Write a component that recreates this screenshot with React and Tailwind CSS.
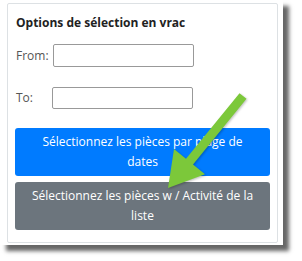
import React from 'react';

const Arrow = () => (
    <svg className="absolute left-0 top-0 pointer-events-none" width="302" height="261" viewBox="0 0 302 261">
        <polygon
            points="168,188 174,149 186,158.8 239.5,93.2 246.5,98.8 193,164.4 205,174.2"
            fill="#7cc83a"
            style={{ filter: 'drop-shadow(1px 1px 1px rgba(0,0,0,0.25))' }}
        />
    </svg>
);

const App = () => {
    return (
        <div className="relative w-[302px] h-[261px] bg-white font-['Open_Sans',sans-serif]">
            <div className="w-[283px] h-[245px] bg-white pl-[7px] pt-[3px] shadow-[6px_6px_4px_rgba(0,0,0,0.6)]">
                <div className="w-[271px] h-[240px] border border-[#dde1e4] rounded-[2px] px-[7px] pt-[10px] flex flex-col">
                    <h2 className="text-[12px] font-bold text-[#222] leading-[18px] pl-[1px]">Options de sélection en vrac</h2>

                    <div className="flex items-center mt-[12px] pl-[1px]">
                        <label className="text-[12px] text-[#555] w-[37px]">From:</label>
                        <input className="w-[141px] h-[23px] border border-[#999] rounded-[2px] bg-white" />
                    </div>

                    <div className="flex items-center mt-[20px] pl-[1px]">
                        <label className="text-[12px] text-[#555] w-[36px]">To:</label>
                        <input className="w-[141px] h-[22px] border border-[#999] rounded-[2px] bg-white" />
                    </div>

                    <button className="mt-[19px] w-full h-[48px] bg-[#007bff] text-white text-[12px] leading-5 rounded-[3px] px-3 text-center">
                        Sélectionnez les pièces par plage de dates
                    </button>
                    <button className="mt-[6px] w-full h-[48px] bg-[#6c757d] text-white text-[12px] leading-5 rounded-[3px] px-2 text-center">
                        Sélectionnez les pièces w / Activité de la liste
                    </button>
                </div>
            </div>
            <Arrow />
        </div>
    );
};

export default App;
